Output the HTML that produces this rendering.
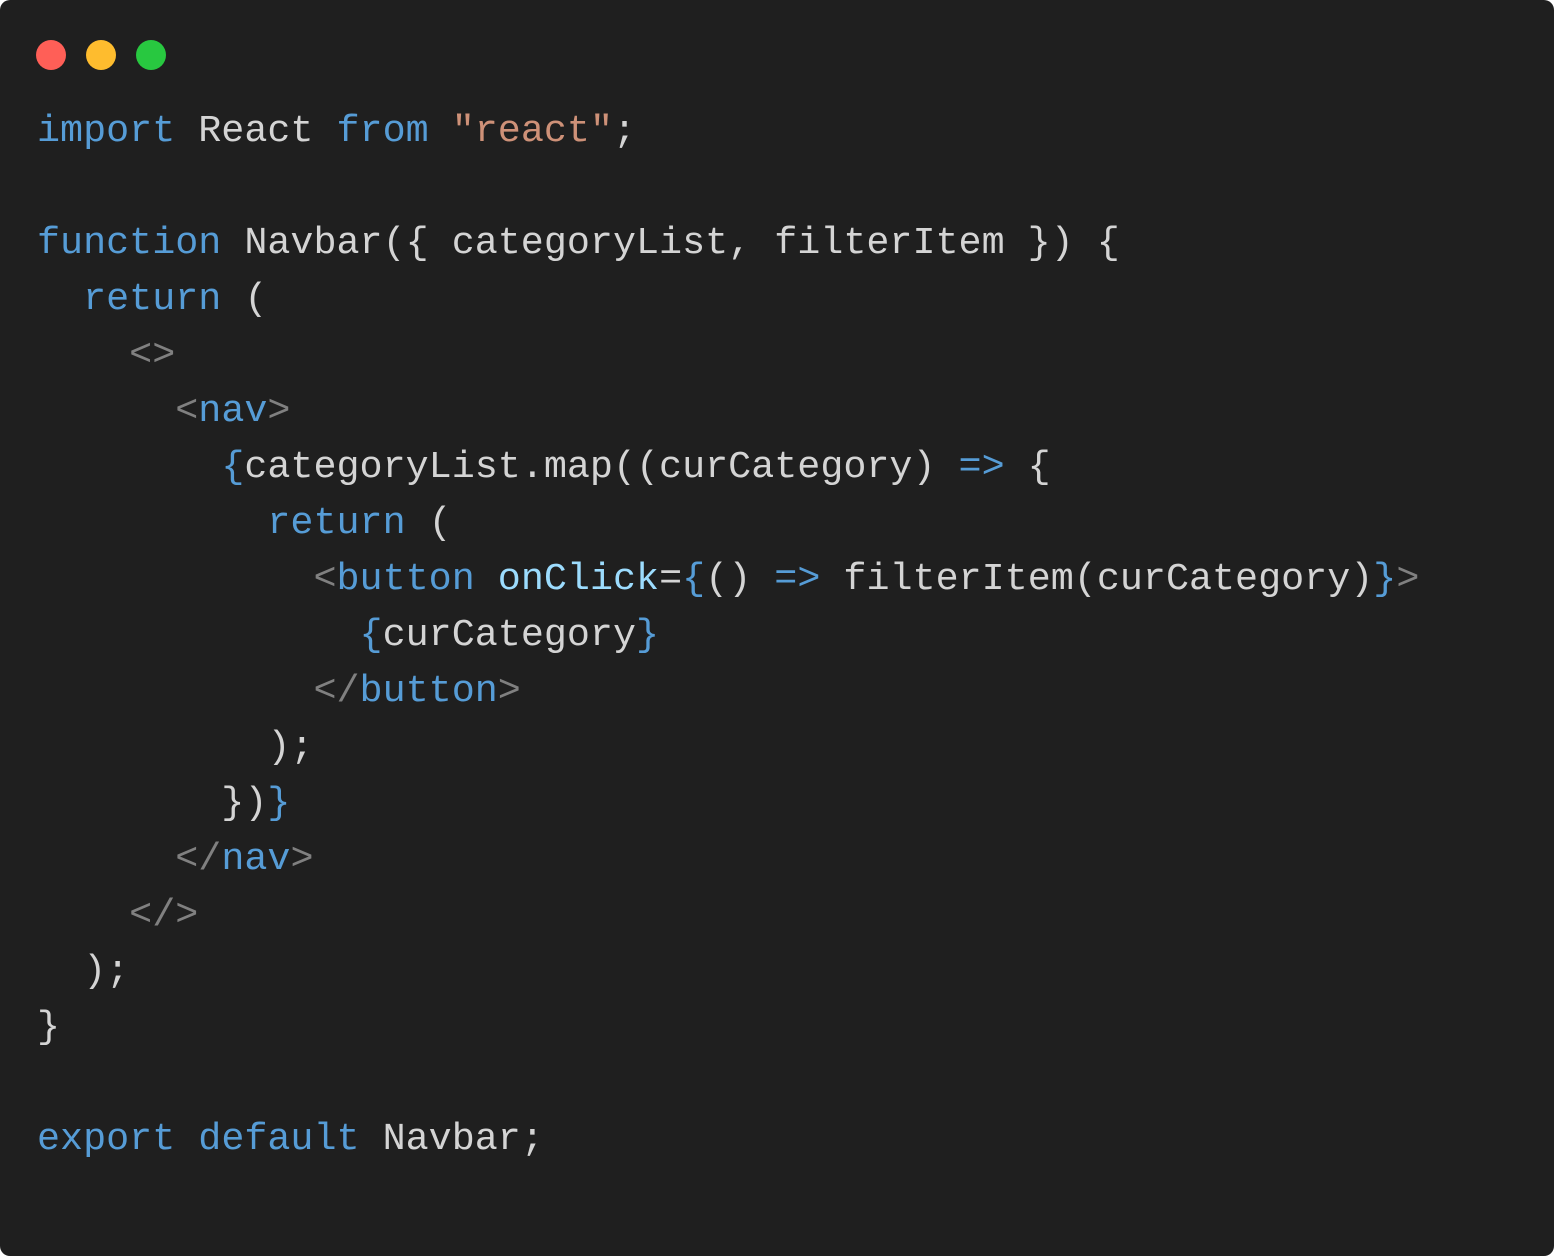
<!DOCTYPE html>
<html><head><meta charset="utf-8"><style>
html,body{margin:0;padding:0;background:#fff;}
.win{position:absolute;left:0;top:0;width:1554px;height:1256px;background:#1f1f1f;border-radius:10px;overflow:hidden;}
.dot{position:absolute;top:40px;width:30px;height:30px;border-radius:50%;}
pre{position:absolute;left:37px;top:103px;margin:0;font-family:"Liberation Mono",monospace;font-size:38.4px;line-height:56px;color:#d4d4d4;white-space:pre;}
.k{color:#569cd6}.s{color:#ce9178}.g{color:#808080}.a{color:#9cdcfe}
</style></head><body><div class="win">
<div class="dot" style="left:36px;background:#ff5f57"></div>
<div class="dot" style="left:86px;background:#febc2e"></div>
<div class="dot" style="left:136px;background:#28c840"></div>
<pre><span class="k">import</span> React <span class="k">from</span> <span class="s">"react"</span>;

<span class="k">function</span> Navbar({ categoryList, filterItem }) {
  <span class="k">return</span> (
    <span class="g">&lt;&gt;</span>
      <span class="g">&lt;</span><span class="k">nav</span><span class="g">&gt;</span>
        <span class="k">{</span>categoryList.map((curCategory) <span class="k">=&gt;</span> {
          <span class="k">return</span> (
            <span class="g">&lt;</span><span class="k">button</span> <span class="a">onClick</span>=<span class="k">{</span>() <span class="k">=&gt;</span> filterItem(curCategory)<span class="k">}</span><span class="g">&gt;</span>
              <span class="k">{</span>curCategory<span class="k">}</span>
            <span class="g">&lt;/</span><span class="k">button</span><span class="g">&gt;</span>
          );
        })<span class="k">}</span>
      <span class="g">&lt;/</span><span class="k">nav</span><span class="g">&gt;</span>
    <span class="g">&lt;/&gt;</span>
  );
}

<span class="k">export</span> <span class="k">default</span> Navbar;</pre>
</div></body></html>
